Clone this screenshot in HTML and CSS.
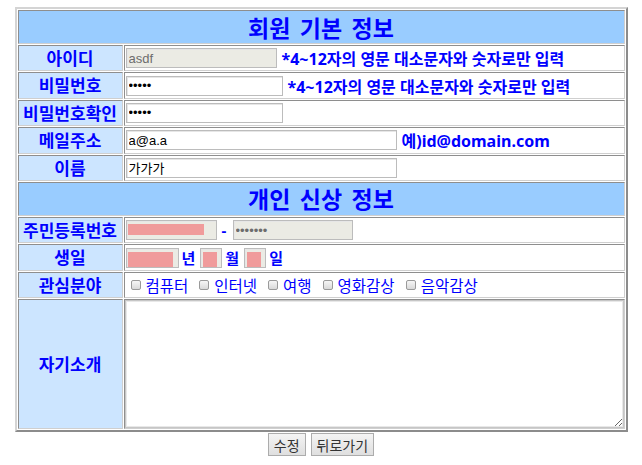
FILE: index.html
```html
<!DOCTYPE html>
<html lang="ko">
<head>
    <meta charset="UTF-8">
    <meta name="viewport" content="width=device-width, initial-scale=1.0">
    <title>회원 정보 수정</title>
    <link rel="stylesheet" href="styles.css">
</head>
<body>
    <form class="member-form">
        <table class="info-table">
            <!-- 기본 정보 -->
            <tr>
                <th colspan="2" class="section-title">회원 기본 정보</th>
            </tr>
            <tr>
                <td class="label">아이디</td>
                <td class="value">
                    <div class="field">
                        <input type="text" class="text-input input-id locked" value="asdf" readonly>
                        <span class="hint">*4~12자의 영문 대소문자와 숫자로만 입력</span>
                    </div>
                </td>
            </tr>
            <tr>
                <td class="label">비밀번호</td>
                <td class="value">
                    <div class="field">
                        <input type="password" class="text-input input-pw" value="12345">
                        <span class="hint">*4~12자의 영문 대소문자와 숫자로만 입력</span>
                    </div>
                </td>
            </tr>
            <tr>
                <td class="label">비밀번호확인</td>
                <td class="value">
                    <div class="field">
                        <input type="password" class="text-input input-pw" value="12345">
                    </div>
                </td>
            </tr>
            <tr>
                <td class="label">메일주소</td>
                <td class="value">
                    <div class="field">
                        <input type="text" class="text-input input-wide" value="a@a.a">
                        <span class="hint">예)id@domain.com</span>
                    </div>
                </td>
            </tr>
            <tr>
                <td class="label">이름</td>
                <td class="value">
                    <div class="field">
                        <input type="text" class="text-input input-wide" value="가가가">
                    </div>
                </td>
            </tr>

            <!-- 신상 정보 -->
            <tr>
                <th colspan="2" class="section-title">개인 신상 정보</th>
            </tr>
            <tr>
                <td class="label">주민등록번호</td>
                <td class="value">
                    <div class="field">
                        <input type="text" class="text-input locked masked input-jumin1" readonly>
                        <span class="dash">-</span>
                        <input type="password" class="text-input locked input-jumin2" value="1234567" readonly>
                    </div>
                </td>
            </tr>
            <tr>
                <td class="label">생일</td>
                <td class="value">
                    <div class="field field-tight">
                        <input type="text" class="text-input locked masked input-year" readonly>
                        <span class="unit">년</span>
                        <input type="text" class="text-input locked masked input-small" readonly>
                        <span class="unit">월</span>
                        <input type="text" class="text-input locked masked input-small" readonly>
                        <span class="unit">일</span>
                    </div>
                </td>
            </tr>
            <tr>
                <td class="label">관심분야</td>
                <td class="value">
                    <div class="field interests">
                        <label class="interest"><input type="checkbox" class="check">컴퓨터</label>
                        <label class="interest"><input type="checkbox" class="check">인터넷</label>
                        <label class="interest"><input type="checkbox" class="check">여행</label>
                        <label class="interest"><input type="checkbox" class="check">영화감상</label>
                        <label class="interest"><input type="checkbox" class="check">음악감상</label>
                    </div>
                </td>
            </tr>
            <tr>
                <td class="label">자기소개</td>
                <td class="value intro-cell">
                    <textarea class="intro"></textarea>
                </td>
            </tr>
        </table>

        <div class="actions">
            <button type="submit" class="btn">수정</button>
            <button type="button" class="btn">뒤로가기</button>
        </div>
    </form>
</body>
</html>
```

FILE: styles.css
```css
/* Basic setup */
* {
    box-sizing: border-box;
}

body {
    margin: 7px 0 0;
    background-color: #fff;
    font-family: "Noto Sans", "Noto Sans CJK KR", sans-serif;
    color: #000;
}

/* Table */
.info-table {
    width: 613px;
    margin: 0 auto;
    border: 2px solid;
    border-color: #d4d4d4 #8c8c8c #8c8c8c #d4d4d4;
    border-spacing: 1px;
}

.info-table th,
.info-table td {
    border: 1px solid;
    border-color: #8e8e8e #cfcfcf #cfcfcf #8e8e8e;
    padding: 0 1px;
    height: 26.4px;
    vertical-align: middle;
}

.info-table .section-title {
    height: 34px;
    background-color: #99ccff;
    color: #0000ff;
    font-family: "Noto Sans CJK KR", sans-serif;
    font-size: 23px;
    font-weight: bold;
    line-height: 1;
    word-spacing: 3px;
    text-align: center;
}

.info-table .label {
    width: 105px;
    padding: 0;
    background-color: #cce5ff;
    color: #0000ff;
    font-family: "Noto Sans CJK KR", sans-serif;
    font-size: 17px;
    font-weight: bold;
    line-height: 1.2;
    text-align: center;
    white-space: nowrap;
}

.value {
    background-color: #fff;
}

.field {
    display: flex;
    align-items: center;
    gap: 5px;
}

/* Inputs */
.text-input {
    height: 20px;
    padding: 0 2px;
    border: 1px solid #bcbcbc;
    box-shadow: inset 1px 1px 0 #e6e6e6;
    background-color: #fff;
    font-family: "Liberation Sans", "Noto Sans CJK KR", sans-serif;
    font-size: 13px;
    color: #000;
    outline: none;
}

.text-input.locked {
    background-color: #ebebe4;
    color: #6d6d6d;
}

.input-id { width: 151px; }
.input-pw { width: 157px; }
.input-wide { width: 271px; }
.input-jumin1 { width: 91px; }
.input-jumin2 { width: 120px; }
.input-year { width: 53px; }
.input-small { width: 22px; }

/* 가려진 값 */
.masked {
    background-image: linear-gradient(#f09b9b, #f09b9b);
    background-repeat: no-repeat;
    background-position: 1px 3px;
    background-size: calc(100% - 13px) 11px;
}

.input-year.masked,
.input-small.masked {
    background-position: 1px 3px;
    background-size: calc(100% - 6px) 15px;
}

.input-small.masked {
    background-position: 2px 3px;
}

.hint {
    color: #0000ff;
    font-size: 16px;
    font-weight: bold;
    white-space: nowrap;
}

.dash {
    width: 6px;
    color: #0000ff;
    font-weight: bold;
    font-size: 15px;
}

.field-tight {
    gap: 3px;
}

.unit {
    margin-right: 2px;
    color: #0000ff;
    font-family: "Noto Sans CJK KR", sans-serif;
    font-size: 15px;
    font-weight: bold;
}

/* 관심분야 */
.interests {
    gap: 11px;
    padding-left: 5px;
}

.interest {
    display: inline-flex;
    align-items: center;
    color: #0000ff;
    font-family: "Noto Sans CJK KR", sans-serif;
    font-size: 15.5px;
    line-height: 1.2;
}

.check {
    appearance: none;
    width: 10px;
    height: 10px;
    margin: 0 5px 0 0;
    border: 1px solid #9a9a9a;
    border-radius: 2px;
    background: linear-gradient(#f6f6f6, #d9d9d9);
}

/* 자기소개 */
.info-table .intro-cell {
    height: 130px;
    padding: 0;
}

.intro {
    display: block;
    width: 100%;
    height: 128px;
    border: 1px solid #c6c6c6;
    box-shadow: inset 0 0 0 1px #e8e8e8;
    font-family: "Liberation Sans", "Noto Sans CJK KR", sans-serif;
    font-size: 13px;
    resize: both;
}

/* Buttons */
.actions {
    display: flex;
    justify-content: center;
    gap: 5px;
    margin-top: 1px;
}

.btn {
    height: 23px;
    padding: 0 5px;
    border: 1px solid #acacac;
    background: linear-gradient(#f4f4f4, #dfdfdf);
    color: #333;
    font-family: "Noto Sans CJK KR", sans-serif;
    font-size: 14px;
    line-height: 1;
    cursor: pointer;
}
```
